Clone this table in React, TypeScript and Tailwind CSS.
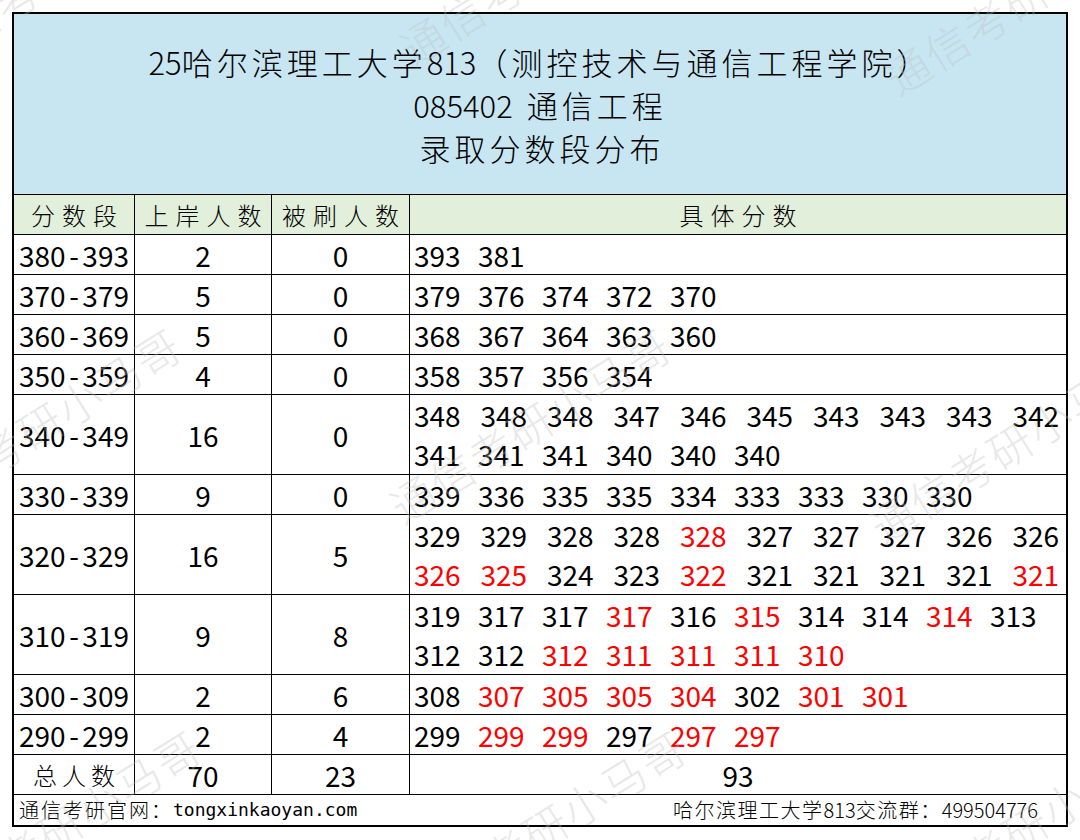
const CJK = /([\u3000-\u303f\u4e00-\u9fff\uff00-\uffef]+)/;

// splits a label into CJK / latin runs so letter-spacing only hits the CJK glyphs
function Mixed({ text, cjk }: { text: string; cjk: string }) {
  return (
    <>
      {text
        .split(CJK)
        .filter(Boolean)
        .map((part, i) =>
          CJK.test(part) ? (
            <span key={i} className={cjk}>
              {part}
            </span>
          ) : (
            <span key={i}>{part}</span>
          )
        )}
    </>
  );
}

type Line = { nums: string; wide?: boolean };
type Row = { range: string; admit: string; cut: string; lines: Line[] };

// "r" suffix = 被刷 (red)
const rows: Row[] = [
  { range: "380-393", admit: "2", cut: "0", lines: [{ nums: "393 381" }] },
  { range: "370-379", admit: "5", cut: "0", lines: [{ nums: "379 376 374 372 370" }] },
  { range: "360-369", admit: "5", cut: "0", lines: [{ nums: "368 367 364 363 360" }] },
  { range: "350-359", admit: "4", cut: "0", lines: [{ nums: "358 357 356 354" }] },
  {
    range: "340-349",
    admit: "16",
    cut: "0",
    lines: [
      { nums: "348 348 348 347 346 345 343 343 343 342", wide: true },
      { nums: "341 341 341 340 340 340" },
    ],
  },
  { range: "330-339", admit: "9", cut: "0", lines: [{ nums: "339 336 335 335 334 333 333 330 330" }] },
  {
    range: "320-329",
    admit: "16",
    cut: "5",
    lines: [
      { nums: "329 329 328 328 328r 327 327 327 326 326", wide: true },
      { nums: "326r 325r 324 323 322r 321 321 321 321 321r", wide: true },
    ],
  },
  {
    range: "310-319",
    admit: "9",
    cut: "8",
    lines: [
      { nums: "319 317 317 317r 316 315r 314 314 314r 313" },
      { nums: "312 312 312r 311r 311r 311r 310r" },
    ],
  },
  { range: "300-309", admit: "2", cut: "6", lines: [{ nums: "308 307r 305r 305r 304r 302 301r 301r" }] },
  { range: "290-299", admit: "2", cut: "4", lines: [{ nums: "299 299r 299r 297 297r 297r" }] },
];

const marks = [
  "left-[-70px] top-[31px]",
  "left-[415px] top-[26px]",
  "left-[900px] top-[56px]",
  "left-[-85px] top-[484px]",
  "left-[405px] top-[484px]",
  "left-[885px] top-[504px]",
  "left-[-65px] top-[886px]",
  "left-[420px] top-[886px]",
  "left-[900px] top-[886px]",
];

function Range({ text }: { text: string }) {
  const [lo, hi] = text.split("-");
  return (
    <span>
      {lo}
      <span className="px-[3.5px]">-</span>
      {hi}
    </span>
  );
}

function ScoreLine({ line }: { line: Line }) {
  return (
    <div className="flex h-[40px] items-center">
      {line.nums.split(" ").map((n, i) => {
        const red = n.endsWith("r");
        return (
          <span
            key={i}
            className={`shrink-0 ${line.wide ? "w-[66.5px]" : "w-[64px]"} ${red ? "text-[#ff0000]" : "text-black"}`}
          >
            {n.replace("r", "")}
          </span>
        );
      })}
    </div>
  );
}

const c1 = "flex w-[121px] shrink-0 items-center justify-center border-r border-black";
const c2 = "flex w-[137px] shrink-0 items-center justify-center border-r border-black";
const c3 = "flex w-[138px] shrink-0 items-center justify-center border-r border-black";

export default function App() {
  return (
    <div className="relative w-[1080px] h-[840px] overflow-hidden bg-white p-[12px] font-['Noto_Sans_CJK_SC',sans-serif] text-black">
      <div className="flex flex-col border-2 border-black">
        {/* title */}
        <div className="flex h-[181px] flex-col items-center justify-center border-b border-black bg-[#c7e6f2] text-[31px] leading-[43px] font-light">
          <div>
            <Mixed text="25哈尔滨理工大学813（测控技术与通信工程学院）" cjk="tracking-[4px]" />
          </div>
          <div className="flex">
            <span>085402</span>
            <span className="ml-[14px] tracking-[4px]">通信工程</span>
          </div>
          <div className="pl-[4px] tracking-[4px]">录取分数段分布</div>
        </div>

        {/* header */}
        <div className="flex h-[40px] border-b border-black bg-[#e2efda] text-[24px] font-light leading-none">
          <div className={`${c1} pl-[7px] tracking-[7px]`}>分数段</div>
          <div className={`${c2} pl-[7px] tracking-[7px]`}>上岸人数</div>
          <div className={`${c3} pl-[7px] tracking-[7px]`}>被刷人数</div>
          <div className="flex min-w-0 flex-1 items-center justify-center pl-[7px] tracking-[7px]">具体分数</div>
        </div>

        {rows.map((r) => (
          <div
            key={r.range}
            className={`flex border-b border-black text-[28px] leading-none ${r.lines.length > 1 ? "h-[80px]" : "h-[40px]"}`}
          >
            <div className={c1}>
              <Range text={r.range} />
            </div>
            <div className={c2}>{r.admit}</div>
            <div className={c3}>{r.cut}</div>
            <div className="flex min-w-0 flex-1 flex-col justify-center pl-[4px]">
              {r.lines.map((l, i) => (
                <ScoreLine key={i} line={l} />
              ))}
            </div>
          </div>
        ))}

        {/* totals */}
        <div className="flex h-[40px] border-b border-black text-[28px] leading-none">
          <div className={`${c1} pl-[5px] text-[24px] font-light tracking-[5px]`}>总人数</div>
          <div className={c2}>70</div>
          <div className={c3}>23</div>
          <div className="flex min-w-0 flex-1 items-center justify-center">93</div>
        </div>

        {/* footer */}
        <div className="flex h-[30px] items-center justify-between pl-[5px] pr-[28px] text-[20px] leading-none font-light">
          <div className="flex items-center">
            <span className="tracking-[2px]">通信考研官网：</span>
            <span className="font-['DejaVu_Sans_Mono',monospace] text-[18px] font-normal">tongxinkaoyan.com</span>
          </div>
          <div>
            <Mixed text="哈尔滨理工大学813交流群：499504776" cjk="tracking-[1.5px]" />
          </div>
        </div>
      </div>

      {/* watermark */}
      {marks.map((m, i) => (
        <div
          key={i}
          className={`pointer-events-none absolute ${m} h-[44px] origin-bottom-left -rotate-[32deg] whitespace-nowrap text-[44px] leading-none font-light tracking-[2px] text-[rgba(190,190,190,0.35)]`}
        >
          通信考研小马哥
        </div>
      ))}
    </div>
  );
}
